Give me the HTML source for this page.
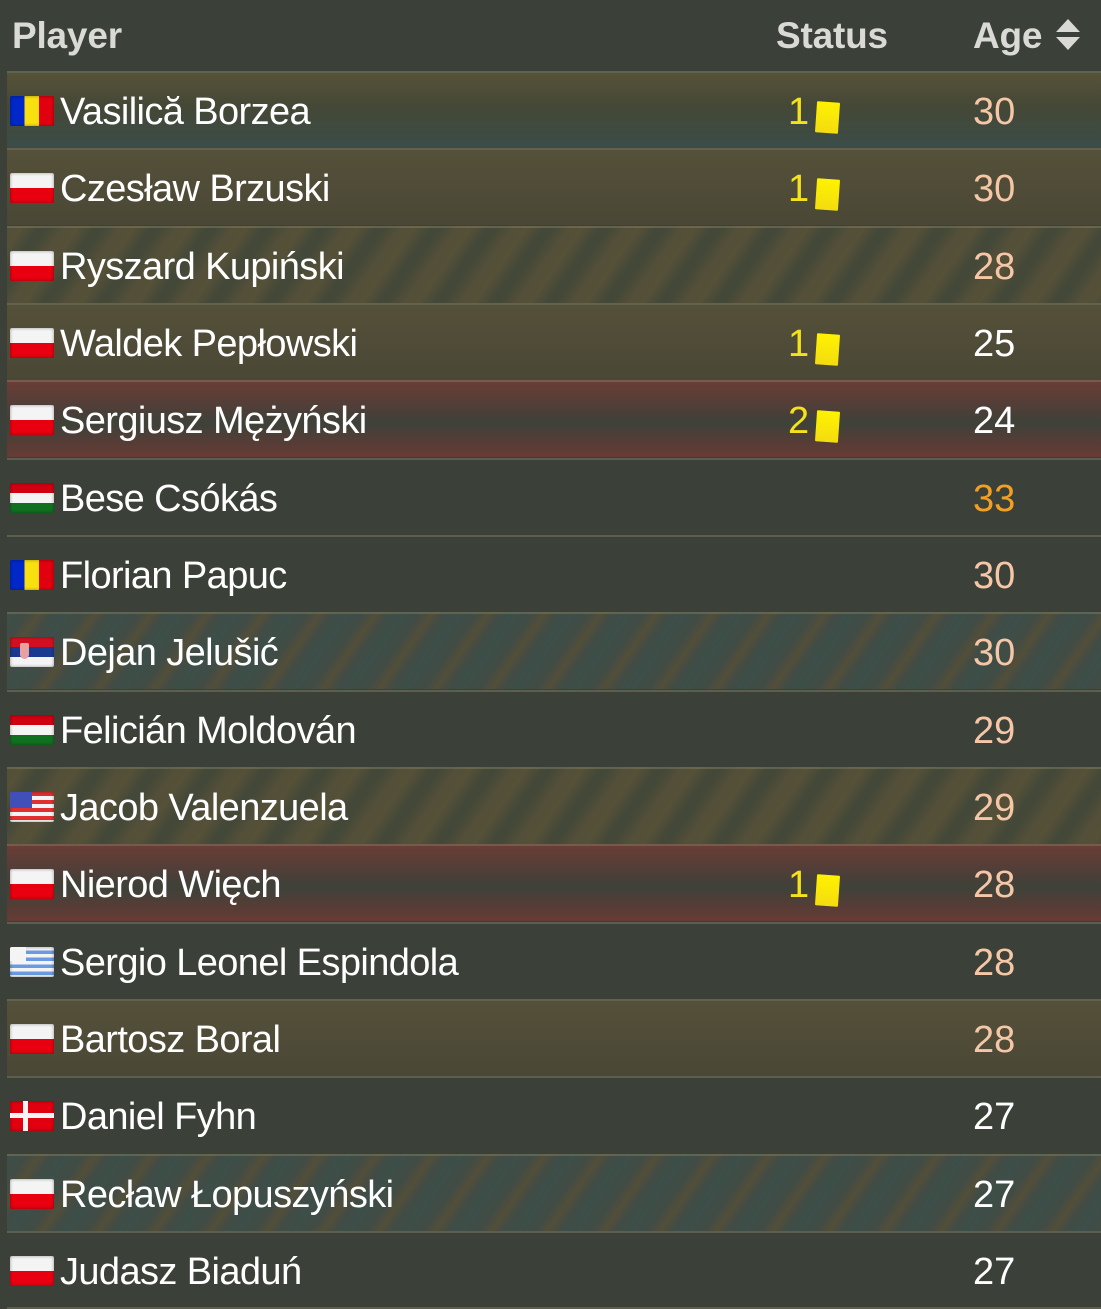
<!DOCTYPE html>
<html><head><meta charset="utf-8"><style>
*{margin:0;padding:0;box-sizing:border-box}
body{width:1101px;height:1309px;background:#3b4039;font-family:"Segoe UI","Liberation Sans",sans-serif;color:#fff;position:relative;overflow:hidden}
.h{position:absolute;top:15px;font-weight:bold;font-size:37px;color:#d9d9d6;letter-spacing:-0.2px}
.r{position:absolute;left:7px;width:1094px;height:77px;border-top:2px solid rgba(120,120,95,0.55)}
.gold{background:linear-gradient(#545039,#4a4736)}
.gt{background:linear-gradient(#575239 0%,#444836 45%,#3b4c48 100%)}
.dark{background:#3b4039}
.red{background:linear-gradient(#6a3d36 0%,#4a3f38 40%,#3e4239 55%,#5a3c36 85%,#683c36 100%)}
.sg{background:repeating-linear-gradient(125deg,#534f39 0px,#555038 12px,#434838 26px,#434838 32px,#534f39 46px)}
.st{background:repeating-linear-gradient(125deg,#3d4e49 0px,#414c45 16px,#524e39 26px,#414c45 36px,#3d4e49 46px)}
.f{position:absolute;left:3px;top:23px;width:44px;height:30px;border-radius:2px;overflow:hidden;box-shadow:inset 0 0 3px rgba(0,0,0,.4)}
.n{position:absolute;left:53px;top:18px;font-size:38px;letter-spacing:-0.6px;white-space:nowrap}
.s{position:absolute;left:781px;top:18px;font-size:38px;color:#f4e21a}
.c{position:absolute;left:809px;top:29px;width:23px;height:31px;background:linear-gradient(#fff200,#f3dc10);transform:rotate(4deg);border-radius:1px}
.a{position:absolute;left:966px;top:18px;font-size:38px}
.p{color:#f5c7a6}.o{color:#f2a024}.w{color:#fff}
</style></head><body>
<div class="h" style="left:12px">Player</div>
<div class="h" style="left:776px">Status</div>
<div class="h" style="left:973px">Age</div>
<svg style="position:absolute;left:1055px;top:19px" width="26" height="32"><polygon points="13,0 25,13 1,13" fill="#d9d9d6"/><polygon points="1,18 25,18 13,31" fill="#d9d9d6"/></svg>

<div class="r gt" style="top:71px"><div class="f" style="background:linear-gradient(90deg,#0028c8 33%,#f8e010 33% 66%,#e00010 66%)"></div><div class="n">Vasilică Borzea</div><div class="s">1</div><div class="c"></div><div class="a p">30</div></div>
<div class="r gold" style="top:148px"><div class="f" style="background:linear-gradient(#f4f4f4 50%,#e80010 50%)"></div><div class="n">Czesław Brzuski</div><div class="s">1</div><div class="c"></div><div class="a p">30</div></div>
<div class="r sg" style="top:226px"><div class="f" style="background:linear-gradient(#f4f4f4 50%,#e80010 50%)"></div><div class="n">Ryszard Kupiński</div><div class="a p">28</div></div>
<div class="r gold" style="top:303px"><div class="f" style="background:linear-gradient(#f4f4f4 50%,#e80010 50%)"></div><div class="n">Waldek Pepłowski</div><div class="s">1</div><div class="c"></div><div class="a w">25</div></div>
<div class="r red" style="top:380px"><div class="f" style="background:linear-gradient(#f4f4f4 50%,#e80010 50%)"></div><div class="n">Sergiusz Mężyński</div><div class="s">2</div><div class="c"></div><div class="a w">24</div></div>
<div class="r dark" style="top:458px"><div class="f" style="background:linear-gradient(#d00010 33%,#f4f4f4 33% 66%,#107020 66%)"></div><div class="n">Bese Csókás</div><div class="a o">33</div></div>
<div class="r dark" style="top:535px"><div class="f" style="background:linear-gradient(90deg,#0028c8 33%,#f8e010 33% 66%,#e00010 66%)"></div><div class="n">Florian Papuc</div><div class="a p">30</div></div>
<div class="r st" style="top:612px"><div class="f" style="background:linear-gradient(#d01020 33%,#1a3a90 33% 66%,#f4f4f4 66%)"><div style="position:absolute;left:10px;top:6px;width:9px;height:16px;background:#e8a0a0;border-radius:2px 2px 5px 5px"></div></div><div class="n">Dejan Jelušić</div><div class="a p">30</div></div>
<div class="r dark" style="top:690px"><div class="f" style="background:linear-gradient(#d00010 33%,#f4f4f4 33% 66%,#107020 66%)"></div><div class="n">Felicián Moldován</div><div class="a p">29</div></div>
<div class="r sg" style="top:767px"><div class="f" style="background:repeating-linear-gradient(#e03030 0 4px,#f4f4f4 4px 8px)"><div style="position:absolute;left:0;top:0;width:22px;height:16px;background:#4050b8"></div></div><div class="n">Jacob Valenzuela</div><div class="a p">29</div></div>
<div class="r red" style="top:844px"><div class="f" style="background:linear-gradient(#f4f4f4 50%,#e80010 50%)"></div><div class="n">Nierod Więch</div><div class="s">1</div><div class="c"></div><div class="a p">28</div></div>
<div class="r dark" style="top:922px"><div class="f" style="background:repeating-linear-gradient(#f4f4f4 0 3.5px,#6a9ae0 3.5px 7px)"><div style="position:absolute;left:0;top:0;width:16px;height:14px;background:#f4f4f4"></div></div><div class="n">Sergio Leonel Espindola</div><div class="a p">28</div></div>
<div class="r gold" style="top:999px"><div class="f" style="background:linear-gradient(#f4f4f4 50%,#e80010 50%)"></div><div class="n">Bartosz Boral</div><div class="a p">28</div></div>
<div class="r dark" style="top:1076px"><div class="f" style="background:#e00010"><div style="position:absolute;left:13px;top:0;width:5px;height:30px;background:#f4f4f4"></div><div style="position:absolute;left:0;top:12px;width:44px;height:5px;background:#f4f4f4"></div></div><div class="n">Daniel Fyhn</div><div class="a w">27</div></div>
<div class="r st" style="top:1154px"><div class="f" style="background:linear-gradient(#f4f4f4 50%,#e80010 50%)"></div><div class="n">Recław Łopuszyński</div><div class="a w">27</div></div>
<div class="r dark" style="top:1231px"><div class="f" style="background:linear-gradient(#f4f4f4 50%,#e80010 50%)"></div><div class="n">Judasz Biaduń</div><div class="a w">27</div></div>
<div style="position:absolute;left:7px;top:1307px;width:1094px;height:2px;background:rgba(120,120,95,0.55)"></div>
</body></html>
